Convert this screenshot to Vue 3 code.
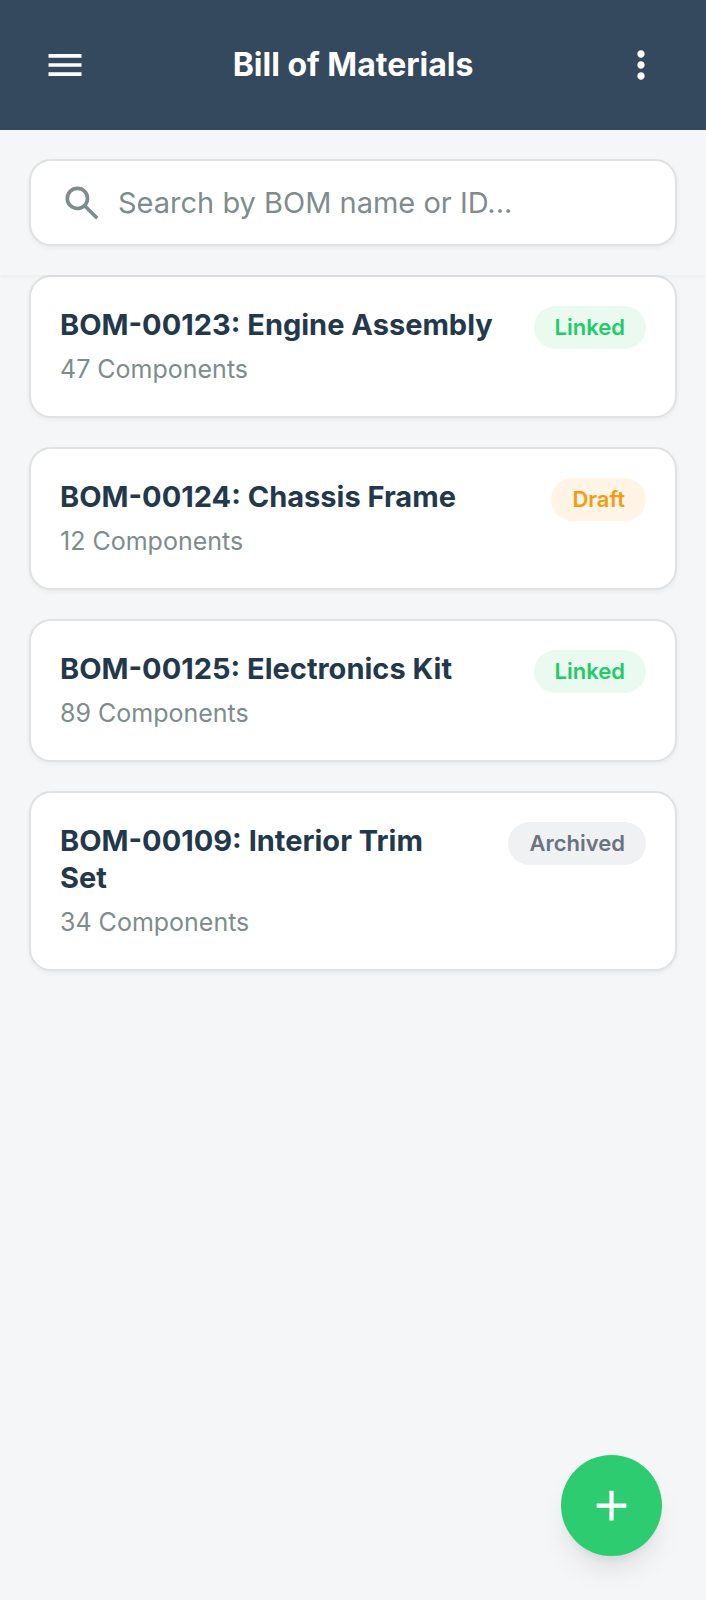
<script setup>
import { ref, computed } from 'vue'

const query = ref('')

const boms = [
  { id: 'BOM-00123', name: 'Engine Assembly', components: 47, status: 'Linked' },
  { id: 'BOM-00124', name: 'Chassis Frame', components: 12, status: 'Draft' },
  { id: 'BOM-00125', name: 'Electronics Kit', components: 89, status: 'Linked' },
  { id: 'BOM-00109', name: 'Interior Trim Set', components: 34, status: 'Archived' },
]

const visible = computed(() => {
  const q = query.value.trim().toLowerCase()
  return boms.filter((b) => `${b.id}: ${b.name}`.toLowerCase().includes(q))
})
</script>

<template>
  <div class="screen">
    <header class="topbar">
      <button class="icon-button" type="button" aria-label="Open menu">
        <svg class="icon" viewBox="0 0 24 24" aria-hidden="true">
          <path d="M3 18h18v-2H3v2zm0-5h18v-2H3v2zm0-7v2h18V6H3z" />
        </svg>
      </button>
      <h1 class="topbar-title">Bill of Materials</h1>
      <button class="icon-button" type="button" aria-label="More options">
        <svg class="icon" viewBox="0 0 24 24" aria-hidden="true">
          <path d="M12 8c1.1 0 2-.9 2-2s-.9-2-2-2-2 .9-2 2 .9 2 2 2zm0 2c-1.1 0-2 .9-2 2s.9 2 2 2 2-.9 2-2-.9-2-2-2zm0 6c-1.1 0-2 .9-2 2s.9 2 2 2 2-.9 2-2-.9-2-2-2z" />
        </svg>
      </button>
    </header>

    <div class="search-section">
      <label class="search-box">
        <svg class="icon search-icon" viewBox="0 -960 960 960" aria-hidden="true">
          <path d="M784-120 532-372q-30 24-69 38t-83 14q-109 0-184.500-75.500T120-580q0-109 75.500-184.500T380-840q109 0 184.500 75.500T640-580q0 44-14 83t-38 69l252 252-56 56ZM380-400q75 0 127.500-52.500T560-580q0-75-52.500-127.500T380-760q-75 0-127.500 52.500T200-580q0 75 52.500 127.500T380-400Z" />
        </svg>
        <input
          v-model="query"
          class="search-input"
          type="text"
          aria-label="Search by BOM name or ID"
          placeholder="Search by BOM name or ID..."
        />
      </label>
    </div>

    <main class="list">
      <article v-for="bom in visible" :key="bom.id" class="card">
        <div class="card-text">
          <h2 class="card-title">{{ bom.id }}: {{ bom.name }}</h2>
          <p class="card-sub">{{ bom.components }} Components</p>
        </div>
        <span class="badge" :class="bom.status.toLowerCase()">{{ bom.status }}</span>
      </article>
    </main>

    <button class="fab" type="button" aria-label="Add bill of materials">
      <svg class="fab-icon" viewBox="0 0 24 24" aria-hidden="true">
        <path d="M19 13h-6v6h-2v-6H5v-2h6V5h2v6h6v2z" />
      </svg>
    </button>
  </div>
</template>

<style>
body {
  background: #f4f6f8;
}
</style>

<style scoped>
.screen {
  min-height: 100vh;
  background: #f4f6f8;
  font-family: Inter, "Liberation Sans", sans-serif;
}

.topbar {
  display: flex;
  align-items: center;
  justify-content: space-between;
  padding: 29px;
  background: #34495e;
  color: #ffffff;
}

.topbar-title {
  margin: 0;
  font-size: 32px;
  line-height: 40px;
  font-weight: 700;
}

.icon-button {
  display: flex;
  align-items: center;
  justify-content: center;
  width: 72px;
  height: 72px;
  padding: 0;
  border: 0;
  border-radius: 50%;
  background: none;
  color: inherit;
}

.icon {
  flex: none;
  width: 44px;
  height: 44px;
  fill: currentColor;
}

.search-section {
  position: sticky;
  top: 0;
  z-index: 1;
  padding: 29px;
  background: #f4f6f8;
  box-shadow: 0 2px 4px rgba(0, 0, 0, 0.04);
}

.search-box {
  display: flex;
  align-items: center;
  gap: 14px;
  box-sizing: border-box;
  height: 87px;
  padding: 0 29px;
  border: 2px solid #dfe1e2;
  border-radius: 22px;
  background: #ffffff;
  box-shadow: 0 2px 4px rgba(0, 0, 0, 0.05);
}

.search-icon {
  color: #7f8c8d;
}

.search-input {
  flex: 1;
  min-width: 0;
  height: 44px;
  padding: 0;
  border: 0;
  outline: 0;
  background: none;
  color: #2c3e50;
  font-family: inherit;
  font-size: 29px;
}

.search-input::placeholder {
  color: #7f8c8d;
  opacity: 1;
}

.list {
  display: flex;
  flex-direction: column;
  gap: 29px;
  padding: 0 29px 174px;
}

.card {
  display: flex;
  align-items: flex-start;
  justify-content: space-between;
  gap: 36px;
  padding: 29px;
  border: 2px solid #dfe1e2;
  border-radius: 22px;
  background: #ffffff;
  box-shadow: 0 2px 4px rgba(0, 0, 0, 0.05);
}

.card-text {
  min-width: 0;
}

.card-title {
  margin: 0 0 8px;
  color: #24384c;
  font-size: 29px;
  line-height: 37px;
  font-weight: 700;
}

.card-sub {
  margin: 0;
  color: #7f8c8d;
  font-size: 25px;
  line-height: 36px;
}

.badge {
  flex: none;
  padding: 7px 21px;
  border-radius: 22px;
  font-size: 22px;
  line-height: 29px;
  font-weight: 600;
}

.linked {
  background: #eafaf1;
  color: #22cb69;
}

.draft {
  background: #fff4e6;
  color: #f39c12;
}

.archived {
  background: #f0f1f3;
  color: #6b7280;
}

.fab {
  position: fixed;
  right: 44px;
  bottom: 44px;
  z-index: 2;
  display: flex;
  align-items: center;
  justify-content: center;
  width: 101px;
  height: 101px;
  padding: 0;
  border: 0;
  border-radius: 50%;
  background: #2ecc71;
  color: #ffffff;
  box-shadow: 0 18px 28px -6px rgba(0, 0, 0, 0.1), 0 8px 12px -6px rgba(0, 0, 0, 0.08);
}

.fab-icon {
  width: 51px;
  height: 51px;
  fill: currentColor;
}
</style>
